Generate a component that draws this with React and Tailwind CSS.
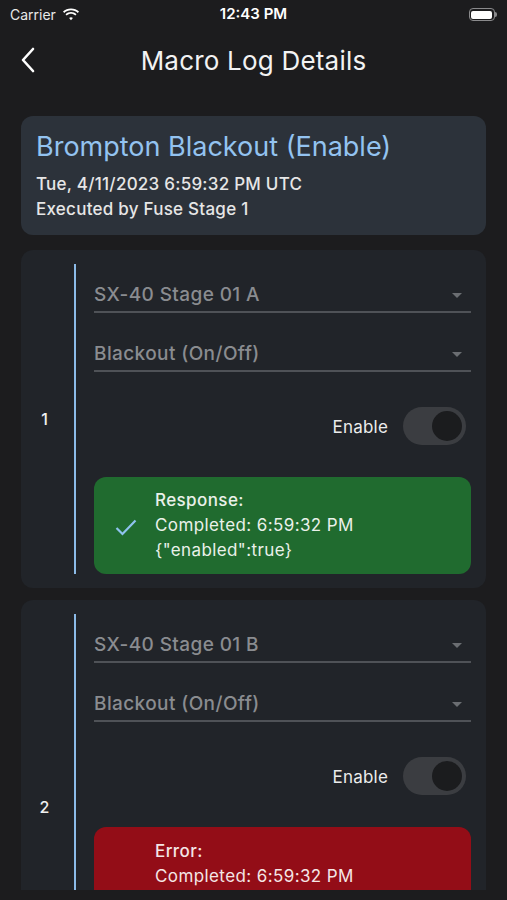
import React from 'react';

const font = { fontFamily: 'Inter, "Noto Sans", sans-serif' };

const Wifi = () => (
    <svg width="18" height="13" viewBox="0 0 18 13" fill="#fff">
        <path d="M9 2.2c2.6 0 5 1 6.8 2.7l1.2-1.3C14.9 1.6 12.1.4 9 .4S3.1 1.6 1 3.6l1.2 1.3C4 3.2 6.4 2.2 9 2.2z" />
        <path d="M9 5.8c1.6 0 3.1.6 4.3 1.7l1.2-1.3C13 4.8 11.1 4 9 4S5 4.8 3.5 6.2l1.2 1.3C5.9 6.4 7.4 5.8 9 5.8z" />
        <path d="M9 9.3c.7 0 1.4.3 1.9.7L9 12.2 7.1 10c.5-.4 1.2-.7 1.9-.7z" />
    </svg>
);

const Caret = () => (
    <svg width="12" height="7" viewBox="0 0 12 7" className="mr-[8px] mb-[8px]">
        <path d="M1 1h10L6 6z" fill="#6b6e72" />
    </svg>
);

const Field = ({ label, first }) => (
    <div className={`${first ? 'h-[49px]' : 'h-[59px]'} flex items-end justify-between border-b-[2px] border-[#4f5257] pb-[4px]`}>
        <span className="text-[19px] leading-[24px] font-medium tracking-[0.4px] text-[#8a8c90]">{label}</span>
        <Caret />
    </div>
);

const Toggle = () => (
    <div className="w-[63px] h-[38px] rounded-full bg-[#3b3d41] flex items-center justify-end pr-[4px]">
        <div className="w-[30px] h-[30px] rounded-full bg-[#1b1c1e]" />
    </div>
);

const Step = ({ n, device, status }) => (
    <div className="bg-[#212429] rounded-[12px] flex py-[14px] pr-[15px]">
        <div className="w-[53px] flex items-center justify-center pr-[6px] text-[16px] font-medium text-[#f0f0f0]">{n}</div>
        <div className="w-[2px] bg-[#8cbbe8] shrink-0" />
        <div className="flex-1 pl-[18px]">
            <Field label={device} first />
            <Field label="Blackout (On/Off)" />
            <div className="flex items-center justify-end gap-[15px] mt-[35px] mr-[5px]">
                <span className="text-[17px] tracking-[0.2px] text-[#ececec] pt-[3px]">Enable</span>
                <Toggle />
            </div>
            {status}
        </div>
    </div>
);

const Response = () => (
    <div className="mt-[32px] bg-[#206b2f] rounded-[12px] h-[97px] flex items-center text-[#eaf1ea]">
        <svg width="22" height="17" viewBox="0 0 22 17" className="ml-[21px] mr-[18px] mt-[4px]">
            <path d="M1.5 9l6 6L20.5 1.5" fill="none" stroke="#8fc3ee" strokeWidth="2.2" />
        </svg>
        <div className="text-[17px] leading-[25px] tracking-[0.4px]">
            <div className="font-medium">Response:</div>
            <div>Completed: 6:59:32 PM</div>
            <div>{'{"enabled":true}'}</div>
        </div>
    </div>
);

const ErrorBox = () => (
    <div className="mt-[32px] bg-[#930d17] rounded-[12px] min-h-[172px] pl-[61px] pt-[12px] pr-[14px] text-[#f4e6e6] text-[17px] leading-[25px] tracking-[0.4px]">
        <div className="font-medium">Error:</div>
        <div>Completed: 6:59:32 PM</div>
    </div>
);

export default function App() {
    return (
        <div className="w-[507px] h-[900px] bg-[#1c1c1e] overflow-hidden text-white" style={font}>
            {/* status bar */}
            <div className="h-[28px] flex items-center justify-between px-[10px] pt-[1px]">
                <div className="flex items-center gap-[6px] w-[120px]">
                    <span className="text-[14px] text-[#e8e8e8]">Carrier</span>
                    <Wifi />
                </div>
                <span className="text-[15px] font-semibold">12:43 PM</span>
                <div className="w-[120px] flex justify-end">
                    <div className="flex items-center">
                        <div className="w-[26px] h-[13px] rounded-[4px] border-[1.5px] border-[#8a8a8c] p-[1.5px]">
                            <div className="w-full h-full bg-white rounded-[2px]" />
                        </div>
                        <div className="w-[2px] h-[5px] bg-[#8a8a8c] rounded-r-sm" />
                    </div>
                </div>
            </div>

            {/* nav */}
            <div className="h-[64px] relative flex items-center justify-center">
                <svg width="16" height="26" viewBox="0 0 16 26" className="absolute left-[20px] top-[19px]">
                    <path d="M13 2L3 13l10 11" fill="none" stroke="#fff" strokeWidth="2.6" strokeLinecap="round" strokeLinejoin="round" />
                </svg>
                <h1 className="text-[26px] text-[#f2f2f2] tracking-[0.2px]">Macro Log Details</h1>
            </div>

            {/* content */}
            <div className="h-[798px] overflow-hidden rounded-b-[10px] px-[21px] pt-[24px] flex flex-col">
                <div className="bg-[#2c323a] rounded-[12px] h-[119px] px-[15px] pt-[14px] shrink-0">
                    <div className="text-[27px] leading-[34px] text-[#93c3f0]">Brompton Blackout (Enable)</div>
                    <div className="mt-[8px] text-[17px] leading-[25px] tracking-[0.25px] font-medium text-[#e6e6e6]">Tue, 4/11/2023 6:59:32 PM UTC</div>
                    <div className="text-[17px] leading-[25px] tracking-[0.25px] font-medium text-[#e6e6e6]">Executed by Fuse Stage 1</div>
                </div>
                <div className="mt-[15px] flex flex-col gap-[12px] shrink-0">
                    <Step n="1" device="SX-40 Stage 01 A" status={<Response />} />
                    <Step n="2" device="SX-40 Stage 01 B" status={<ErrorBox />} />
                </div>
            </div>
        </div>
    );
}
